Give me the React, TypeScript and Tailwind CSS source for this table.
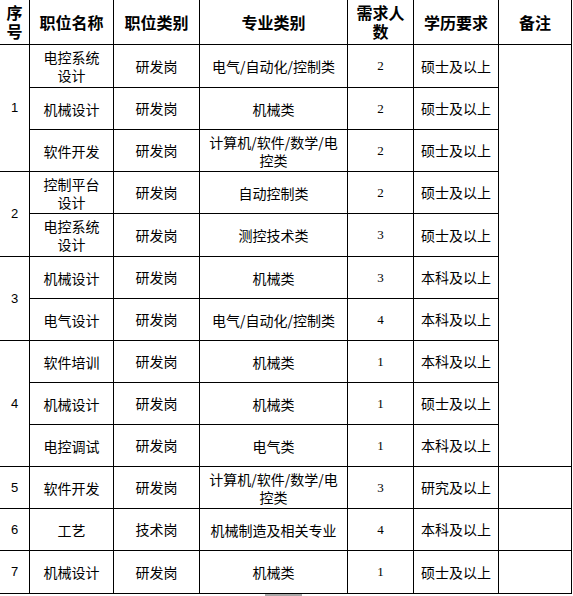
import React from 'react';

type Row = {
  no?: string;
  span?: number;
  name: string[];
  type: string;
  major: string[];
  count: string;
  edu: string;
  note?: number;
  h: number;
};

const rows: Row[] = [
  { no: '1', span: 3, name: ['电控系统', '设计'], type: '研发岗', major: ['电气/自动化/控制类'], count: '2', edu: '硕士及以上', note: 10, h: 43 },
  { name: ['机械设计'], type: '研发岗', major: ['机械类'], count: '2', edu: '硕士及以上', h: 42 },
  { name: ['软件开发'], type: '研发岗', major: ['计算机/软件/数学/电', '控类'], count: '2', edu: '硕士及以上', h: 42 },
  { no: '2', span: 2, name: ['控制平台', '设计'], type: '研发岗', major: ['自动控制类'], count: '2', edu: '硕士及以上', h: 42 },
  { name: ['电控系统', '设计'], type: '研发岗', major: ['测控技术类'], count: '3', edu: '硕士及以上', h: 43 },
  { no: '3', span: 2, name: ['机械设计'], type: '研发岗', major: ['机械类'], count: '3', edu: '本科及以上', h: 42 },
  { name: ['电气设计'], type: '研发岗', major: ['电气/自动化/控制类'], count: '4', edu: '本科及以上', h: 42 },
  { no: '4', span: 3, name: ['软件培训'], type: '研发岗', major: ['机械类'], count: '1', edu: '本科及以上', h: 42 },
  { name: ['机械设计'], type: '研发岗', major: ['机械类'], count: '1', edu: '硕士及以上', h: 42 },
  { name: ['电控调试'], type: '研发岗', major: ['电气类'], count: '1', edu: '本科及以上', h: 42 },
  { no: '5', span: 1, name: ['软件开发'], type: '研发岗', major: ['计算机/软件/数学/电', '控类'], count: '3', edu: '研究及以上', note: 1, h: 42 },
  { no: '6', span: 1, name: ['工艺'], type: '技术岗', major: ['机械制造及相关专业'], count: '4', edu: '本科及以上', note: 1, h: 42 },
  { no: '7', span: 1, name: ['机械设计'], type: '研发岗', major: ['机械类'], count: '1', edu: '硕士及以上', note: 1, h: 43 },
];

const cell = 'border-r border-b border-black text-center align-middle p-0';

function Lines({ parts }: { parts: string[] }) {
  return (
    <div className="leading-[18px] whitespace-nowrap">
      {parts.map((p, i) => (
        <div key={i}>{p}</div>
      ))}
    </div>
  );
}

export default function App() {
  return (
    <div
      className="w-[573px] h-[596px] bg-white overflow-hidden text-black"
      style={{ fontFamily: '"Noto Sans CJK SC", "Noto Sans", sans-serif' }}
    >
      <table className="table-fixed border-separate border-spacing-0 w-[572px]">
        <colgroup>
          <col className="w-[30px]" />
          <col className="w-[84px]" />
          <col className="w-[86px]" />
          <col className="w-[148px]" />
          <col className="w-[66px]" />
          <col className="w-[85px]" />
          <col className="w-[73px]" />
        </colgroup>
        <thead>
          <tr className="h-[45px] text-[16px] font-bold leading-[19px]">
            <th className={cell}>序<br />号</th>
            <th className={cell}>职位名称</th>
            <th className={cell}>职位类别</th>
            <th className={cell}>专业类别</th>
            <th className={cell}>需求人<br />数</th>
            <th className={cell}>学历要求</th>
            <th className={cell}>备注</th>
          </tr>
        </thead>
        <tbody className="text-[14px]">
          {rows.map((r, i) => (
            <tr key={i} style={{ height: r.h }}>
              {r.no && (
                <td
                  rowSpan={r.span}
                  className={`${cell} text-[13px]`}
                  style={{ fontFamily: '"Liberation Sans", sans-serif' }}
                >
                  {r.no}
                </td>
              )}
              <td className={cell}>
                <Lines parts={r.name} />
              </td>
              <td className={cell}>{r.type}</td>
              <td className={cell}>
                <Lines parts={r.major} />
              </td>
              <td
                className={`${cell} text-[13px]`}
                style={{ fontFamily: '"Liberation Serif", serif' }}
              >
                {r.count}
              </td>
              <td className={cell}>{r.edu}</td>
              {r.note && <td rowSpan={r.note} className={cell}></td>}
            </tr>
          ))}
        </tbody>
      </table>
      <div className="ml-[265px] w-[37px] h-[3px] bg-[#a6a6a6]" />
    </div>
  );
}
